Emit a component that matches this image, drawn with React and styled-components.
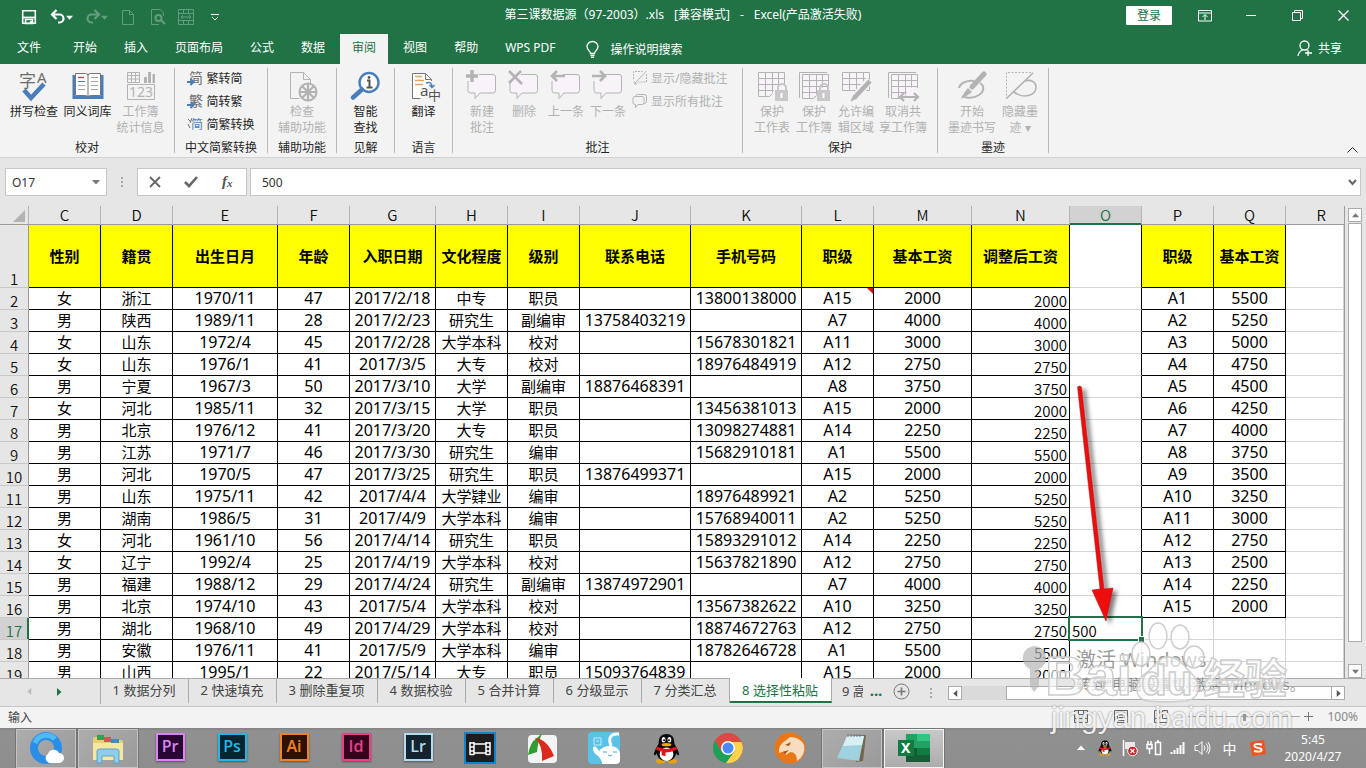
import React, { useState } from "react";
import styled, { createGlobalStyle, css } from "styled-components";

const GlobalStyle = createGlobalStyle`
  * { box-sizing: border-box; }
  body { margin: 0; overflow: hidden; }
  body, button, input {
    font-family: "Noto Sans", "Noto Sans CJK SC", sans-serif;
    font-size: 12px;
    color: #262626;
  }
  button { border: 0; padding: 0; background: none; }
  svg { display: block; flex: none; overflow: visible; }
`;

const Shell = styled.div`
  display: flex;
  flex-direction: column;
  height: 100vh;
  background: #e6e6e6;
  position: relative;
`;

/* ---------- title bar ---------- */
const TitleBar = styled.header`
  display: grid;
  grid-template-columns: 1fr auto 1fr;
  align-items: center;
  height: 34px;
  background: #217346;
  color: #fff;
`;

const QuickAccess = styled.div`
  display: flex;
  align-items: center;
  padding-left: 21px;
`;

const QuickButton = styled.button`
  width: ${(p) => p.$w}px;
  height: 24px;
  display: flex;
  align-items: center;
  color: #fff;
  opacity: ${(p) => (p.disabled ? 0.3 : 1)};
`;

const Title = styled.div`
  display: flex;
  gap: 10px;
  line-height: 30px;
  height: 34px;
`;

const WindowTools = styled.div`
  display: flex;
  justify-content: flex-end;
  height: 34px;
  padding-top: 2px;
`;

const LoginButton = styled.button`
  width: 46px;
  height: 19px;
  margin: 4px 10px 0 0;
  border-radius: 1px;
  background: #fff;
  color: #217346;
  line-height: 18px;
`;

const WindowButton = styled.button`
  width: 46px;
  height: 27px;
  display: grid;
  place-items: center;
  color: #fff;
`;

/* ---------- tabs ---------- */
const TabRow = styled.nav`
  display: flex;
  gap: 3px;
  height: 30px;
  background: #217346;
  color: #fff;
`;

const RibbonTab = styled.button`
  padding: 0 ${(p) => (p.$file ? 17 : 12)}px;
  color: ${(p) => (p.$active ? "#217346" : "#fff")};
  background: ${(p) => (p.$active ? "#f3f3f3" : "transparent")};
  line-height: 27px;
  padding-bottom: 3px;
  white-space: nowrap;
`;

const TellMe = styled.button`
  display: flex;
  align-items: center;
  gap: 12px;
  margin-left: 15px;
  color: #fff;
`;

const Share = styled(TellMe)`
  gap: 5px;
  margin: 0 24px 0 auto;
  padding-bottom: 2px;
`;

/* ---------- ribbon ---------- */
const Ribbon = styled.section`
  display: flex;
  position: relative;
  height: 94px;
  padding-top: 4px;
  background: #f3f3f3;
  border-bottom: 1px solid #d2d2d2;
`;

const Group = styled.div`
  width: ${(p) => p.$w}px;
  height: 85px;
  display: flex;
  flex-direction: column;
  justify-content: space-between;
  align-items: center;
  border-right: 1px solid #b8b8b8;
`;

const GroupBody = styled.div`
  display: flex;
  align-items: flex-start;
  ${(p) => p.$start && "align-self: flex-start; padding-left: 8px;"}
`;

const GroupLabel = styled.div`
  line-height: 11px;
`;

const BigButton = styled.button`
  width: ${(p) => p.$w}px;
  padding-top: 2px;
  display: flex;
  flex-direction: column;
  align-items: center;
  white-space: pre;
  line-height: 16px;
  color: ${(p) => (p.disabled ? "#b1b1b1" : "#262626")};
  & > svg { margin-bottom: 2px; }
`;

const SmallList = styled.div`
  display: flex;
  flex-direction: column;
  ${(p) => p.$inset && "padding-left: 3px;"}
`;

const SmallButton = styled.button`
  display: flex;
  align-items: center;
  gap: 3px;
  height: 23px;
  padding-bottom: 3px;
  white-space: nowrap;
  color: ${(p) => (p.disabled ? "#b1b1b1" : "#262626")};
`;

const CollapseButton = styled.button`
  margin: auto 8px 4px auto;
`;

/* ---------- formula bar ---------- */
const FormulaBar = styled.div`
  display: flex;
  align-items: center;
  height: 48px;
  padding: 0 5px;
`;

const boxed = css`
  height: 28px;
  background: #fff;
  border: 1px solid #c6c6c6;
  display: flex;
  align-items: center;
`;

const NameBox = styled.div`
  ${boxed}
  width: 102px;
  padding: 0 6px;
  justify-content: space-between;
`;

const PlainInput = styled.input`
  flex: 1;
  min-width: 0;
  border: 0;
  padding: 0;
  outline: 0;
  background: transparent;
  color: #333;
`;

const Dots = styled.div`
  width: ${(p) => p.$w}px;
  flex: none;
  align-self: center;
  display: flex;
  justify-content: center;
  &::before {
    content: "";
    width: 2px;
    height: 10px;
    background: repeating-linear-gradient(#a8a8a8 0 2px, transparent 2px 4px);
  }
`;

const EntryButtons = styled.div`
  ${boxed}
  width: 110px;
  justify-content: space-around;
`;

const FormulaBox = styled.div`
  ${boxed}
  flex: 1;
  margin-left: 3px;
  padding: 0 3px 0 11px;
`;

/* ---------- sheet ---------- */
const SheetArea = styled.main`
  display: flex;
  flex: 1;
  min-height: 0;
  overflow: hidden;
`;

const GridPane = styled.div`
  flex: 1;
  min-width: 0;
  overflow: hidden;
  position: relative;
  border-right: 1px solid #9b9b9b;
`;

const Grid = styled.table`
  width: 100%;
  table-layout: fixed;
  border-collapse: separate;
  border-spacing: 0;
  background: #fff;
`;

const ColHead = styled.th`
  height: 19px;
  padding: 0;
  font: 350 15px/18px "Noto Sans CJK SC", sans-serif;
  color: ${(p) => (p.$on ? "#217346" : "#111")};
  background: ${(p) => (p.$on ? "#d2d2d2" : "#e6e6e6")};
  border-bottom: 1px solid #9b9b9b;
  border-right: 1px solid #b5b5b5;
  ${(p) => p.$on && "box-shadow: inset 0 -1px #217346; border-bottom-color: #217346;"}
  ${(p) => p.$last && "text-align: right; padding-right: 18px; border-right: 0;"}
`;

const Corner = styled(ColHead)`
  & > svg { margin: 2px 3px 0 auto; }
`;

const RowHead = styled.th`
  padding: 0;
  height: 22px;
  vertical-align: bottom;
  font: 350 15px/16px "Noto Sans CJK SC", sans-serif;
  color: ${(p) => (p.$on ? "#217346" : "#111")};
  background: ${(p) => (p.$on ? "#d2d2d2" : "#e6e6e6")};
  border-bottom: 1px solid #c8c8c8;
  border-right: 1px solid ${(p) => (p.$on ? "#217346" : "#9b9b9b")};
  ${(p) => p.$on && "box-shadow: inset -1px 0 #217346;"}
`;

const Cell = styled.td`
  position: relative;
  height: 22px;
  padding: 0 0 1px;
  text-align: center;
  white-space: nowrap;
  color: #000;
  font-size: ${(p) => (p.$num ? 16 : 15)}px;
  line-height: 20px;
  border-bottom: 1px solid ${(p) => (p.$ruled ? "#000" : "#d4d4d4")};
  border-right: 1px solid ${(p) => (p.$ruled || p.$edge ? "#000" : "#d4d4d4")};
  ${(p) =>
    p.$adjusted &&
    `text-align: right; vertical-align: bottom; padding: 0 2px 0 0;
     font: 350 15px/16px "Noto Sans CJK SC", sans-serif;`}
`;

const HeadCell = styled(Cell)`
  height: 63px;
  font-weight: 700;
  background: ${(p) => (p.$ruled ? "#ff0" : "#fff")};
`;

const NoteMark = styled.span`
  position: absolute;
  top: 0;
  right: 0;
  border-top: 6px solid #e0141e;
  border-left: 6px solid transparent;
`;

const ActiveCell = styled.div`
  position: absolute;
  inset: -2px -2px -2px -2px;
  border: 2px solid #217346;
  background: #fff;
  display: flex;
  align-items: flex-end;
  z-index: 1;
  &::after {
    content: "";
    position: absolute;
    right: -3px;
    bottom: -3px;
    width: 5px;
    height: 5px;
    background: #217346;
    outline: 1px solid #fff;
  }
  input {
    width: 100%;
    border: 0;
    outline: 0;
    padding: 0 2px;
    height: 18px;
    font: 350 15px/16px "Noto Sans CJK SC", sans-serif;
    background: transparent;
    color: #000;
  }
`;

const Arrow = styled.svg`
  position: absolute;
  left: 1060px;
  top: 175px;
  z-index: 2;
`;

const VScroll = styled.div`
  width: 21px;
  display: flex;
  flex-direction: column;
  padding: 2px 4px 0 3px;
`;

const ScrollButton = styled.button`
  width: 14px;
  height: 14px;
  flex: none;
  display: grid;
  place-items: center;
  background: #fff;
  border: 1px solid #ababab;
`;

const VThumb = styled.div`
  flex: 1;
  margin: 1px 0 22px;
  background: #fff;
  border: 1px solid #ababab;
`;

/* ---------- sheet tabs ---------- */
const SheetBar = styled.div`
  display: flex;
  height: 29px;
  border-top: 1px solid #ababab;
  border-bottom: 1px solid #c6c6c6;
`;

const TabNav = styled.div`
  width: 101px;
  height: 25px;
  display: flex;
  align-items: center;
  padding-left: 26px;
  gap: 22px;
  border-right: 1px solid #ababab;
`;

const SheetTab = styled.button`
  width: ${(p) => p.$w}px;
  height: 25px;
  margin-top: -1px;
  padding-right: 1px;
  font-size: 13px;
  line-height: 23px;
  white-space: nowrap;
  color: #444;
  border-right: 1px solid #ababab;
  ${(p) =>
    p.$active &&
    `background: #fff; color: #217346; border-bottom: 2px solid #217346; line-height: 22px;`}
`;

const CutTab = styled.button`
  width: 31px;
  height: 24px;
  padding-left: 10px;
  font-size: 13px;
  line-height: 23px;
  text-align: left;
  overflow: hidden;
  white-space: nowrap;
  color: #444;
`;

const MoreTabs = styled.button`
  width: 26px;
  height: 22px;
  color: #217346;
  font-size: 15px;
  font-weight: 700;
`;

const AddSheet = styled.button`
  padding: 0 4px 2px;
`;

const HScroll = styled.div`
  flex: 1;
  display: flex;
  margin: 7px 21px 0 0;
  height: 14px;
`;

const HTrack = styled.div`
  flex: 1;
  display: flex;
  padding-left: 44px;
  background: #dadada;
`;

const HThumb = styled.div`
  flex: 1;
  background: #fff;
  border: 1px solid #ababab;
  border-right: 0;
`;

/* ---------- status bar ---------- */
const StatusBar = styled.footer`
  display: flex;
  align-items: center;
  height: 21px;
  padding: 0 8px 2px 8px;
  background: #f3f3f3;
  color: #444;
`;

const ViewButtons = styled.div`
  display: flex;
  gap: 26px;
  margin: 0 20px 0 auto;
`;

const Zoom = styled.label`
  display: flex;
  align-items: center;
  color: #777;
  gap: 4px;
`;

const ZoomRange = styled.input`
  appearance: none;
  width: 112px;
  height: 11px;
  margin: 0;
  background: linear-gradient(#aaa, #aaa) center / 100% 1px no-repeat;
  &::-webkit-slider-thumb {
    appearance: none;
    width: 3px;
    height: 9px;
    background: #999;
  }
`;

const ZoomValue = styled.output`
  margin-left: 10px;
  color: #888;
`;

/* ---------- taskbar ---------- */
const Taskbar = styled.div`
  display: flex;
  align-items: center;
  height: 40px;
  padding-left: 15px;
  background: linear-gradient(#828282, #919191 3px, #8d8d8d);
  color: #fff;
`;

const TaskButton = styled.button`
  width: 60px;
  height: 39px;
  margin: 0 1px;
  display: grid;
  place-items: center;
  ${(p) =>
    p.$open &&
    `background: linear-gradient(135deg, #adadad, #9a9a9a); border: 1px solid #c4c4c4; outline: 1px solid #757575;`}
  ${(p) => p.$front && `background: linear-gradient(#c8c8c8, #acacac); border-color: #f4f4f4;`}
`;

const AdobeTile = styled.span`
  width: 29px;
  height: 28px;
  margin-bottom: 2px;
  display: block;
  border: 2px solid ${(p) => p.$c};
  background: ${(p) => p.$bg};
  color: ${(p) => p.$c};
  font: 600 16px/22px "Open Sans", sans-serif;
  box-shadow: 0 1px 2px rgba(0, 0, 0, 0.4);
`;

const Tray = styled.div`
  display: flex;
  align-items: center;
  margin-left: auto;
`;

const TrayButton = styled.button`
  width: ${(p) => p.$w}px;
  height: 36px;
  display: grid;
  place-items: center;
  color: #fff;
  font-size: 14px;
`;

const Clock = styled.time`
  width: 84px;
  margin: 0 11px 0 0;
  text-align: center;
  line-height: 17px;
`;

/* ---------- overlays ---------- */
const Overlay = styled.div`
  position: absolute;
  right: 64px;
  bottom: 26px;
  width: 284px;
  height: 128px;
  z-index: 3;
  pointer-events: none;
`;

const ActivateNote = styled.div`
  position: absolute;
  left: 58px;
  top: 33px;
  color: rgba(110, 110, 110, 0.7);
  font-size: 15px;
  line-height: 22px;
  white-space: nowrap;
  strong {
    display: block;
    font-weight: 400;
    font-size: 20px;
    line-height: 26px;
  }
`;

const Site = styled.div`
  position: absolute;
  left: 33px;
  top: 87px;
  font: 400 30px/34px "Liberation Sans", sans-serif;
  color: rgba(255, 255, 255, 0.9);
  text-shadow: 0 0 2px rgba(90, 90, 90, 0.8);
`;

const LogoArt = styled.svg`
  position: absolute;
  left: 0;
  top: 0;
`;

/* ---------- icons ---------- */
const BLUE = "#4a7ebb";
const DIM = "#b5b2b6";

const Svg = ({ w = 32, h = w, children, ...rest }) => (
  <svg width={w} height={h} viewBox={`0 0 ${w} ${h}`} fill="none" stroke="currentColor" aria-hidden="true" {...rest}>
    {children}
  </svg>
);

const Caret = ({ dir = "down", color = "#777", size = 7 }) => {
  const turn = { down: 0, left: 90, up: 180, right: 270 }[dir];
  return (
    <svg width={size} height={size} viewBox="0 0 8 8" aria-hidden="true">
      <path d="M0 2H8L4 6.500z" fill={color} transform={`rotate(${turn} 4 4)`} />
    </svg>
  );
};

const Bubble = ({ children }) => (
  <Svg stroke={DIM}>
    <path d="M13 4.500H27a2.500 2.500 0 0 1 2.500 2.500V20.500a2.500 2.500 0 0 1-2.500 2.500H14l-5 5.500v-5.500H4.500a2.500 2.500 0 0 1-2.500-2.500V11" fill="#f7f3f9" />
    <g strokeWidth="3.400">{children}</g>
  </Svg>
);

const Table = ({ children, back }) => (
  <Svg stroke={DIM}>
    {back && <path d="M1.500 28V2.500H29" />}
    <g transform={back ? "translate(2 2)" : ""}>
      <path d="M2.500 2.500h26v17l-3 6-9-2-14 3z" fill="#f7f3f9" stroke="none" />
      <path d="M28.500 16V2.500h-26v24h11l3-3M2.500 8.500h26M2.500 14.500h26M2.500 20.500h15M9.500 2.500v24M16.500 2.500v20M22.500 2.500v13" />
    </g>
    {children}
  </Svg>
);

const Lock = () => (
  <g>
    <path d="M22 20v-2a4 4 0 0 1 8 0v2" strokeWidth="2" stroke="#c9c7ca" />
    <rect x="19" y="20" width="13" height="11" fill="#c9c7ca" stroke="none" />
    <path d="M25.500 23v5" stroke="#fff" strokeWidth="2" />
  </g>
);

const Penguin = ({ size = 30 }) => (
  <svg width={size} height={size} viewBox="0 0 32 32" aria-hidden="true">
    <ellipse cx="10" cy="29" rx="5" ry="2.500" fill="#e7a30c" />
    <ellipse cx="22" cy="29" rx="5" ry="2.500" fill="#e7a30c" />
    <path d="M16 1c-6 0-8 4-8 9 0 2-5 8-5 12 0 2 2 1 3-1 1 5 4 8 10 8s9-3 10-8c1 2 3 3 3 1 0-4-5-10-5-12 0-5-2-9-8-9z" fill="#0b0b0b" />
    <ellipse cx="16" cy="22" rx="7" ry="7" fill="#fff" />
    <ellipse cx="13" cy="7" rx="2" ry="2.800" fill="#fff" />
    <ellipse cx="19" cy="7" rx="2" ry="2.800" fill="#fff" />
    <circle cx="13.500" cy="7.500" r="1" /><circle cx="18.500" cy="7.500" r="1" />
    <ellipse cx="16" cy="12" rx="5" ry="1.600" fill="#f2a51a" />
    <path d="M6 14q10 5 20 0l1 3q-6 3-12 3v4l-4-1v-4q-4-1-6-2z" fill="#e2131c" />
  </svg>
);

const icons = {
  save: (
    <Svg w={16}>
      <path d="M1.700 1.700H14.300V14.300H1.700z" strokeWidth="1.600" />
      <path d="M2 8.500H14" strokeWidth="1.800" />
      <path d="M4.500 10.500H11.500V14.500H4.500z" strokeWidth="1.500" />
      <path d="M9 12h2v3H9z" fill="currentColor" stroke="none" />
    </Svg>
  ),
  undo: (
    <Svg w={16}><path d="M2 5.500h7.500a4 4 0 0 1 0 8H8M6.500 1L2 5.500 6.500 10" strokeWidth="2.200" /></Svg>
  ),
  redo: (
    <Svg w={16}><path d="M14 5.500H6.500a4 4 0 0 0 0 8H8M9.500 1L14 5.500 9.500 10" strokeWidth="2.200" /></Svg>
  ),
  page: <Svg w={16}><path d="M2.500 1.500h7l4 4v10h-11zM9.500 1.500v4h4" /></Svg>,
  preview: (
    <Svg w={16}>
      <path d="M13.500 7V4L10.500.5h-9v15H9" />
      <circle cx="8.500" cy="9" r="3" strokeWidth="2" /><path d="M11 11l4 4" strokeWidth="2" />
    </Svg>
  ),
  fit: <Svg w={16}><path d="M.5.500h15v15H.5zM.5 4.500h15M.5 11.500h15M5.500 1v3M10.500 1v3M5.500 12v3M10.500 12v3M3 8h10M5 6L3 8l2 2M11 6l2 2-2 2" /></Svg>,
  customise: <Svg w={8} h={7}><path d="M0 .5h8M1 3l3 3 3-3" /></Svg>,
  ribbonOpts: <Svg w={14} h={12}><path d="M.5.500h13v10.500H.5zM.5 3h13M7 10V5M4.500 7L7 4.500 9.500 7" /></Svg>,
  min: <Svg w={10} h={2}><path d="M0 .5h10" /></Svg>,
  restore: <Svg w={11}><path d="M.5 2.500h8v8h-8zM2.500 2.500v-2h8v8h-2" /></Svg>,
  close: <Svg w={11}><path d="M.5.500l10 10M10.500.5l-10 10" strokeWidth="1.300" /></Svg>,
  bulb: <Svg w={13} h={17}><path d="M4.500 12.500c0-2.500-3.500-3.500-3.500-7a5.500 5 0 0 1 11 0c0 3.500-3.500 4.500-3.500 7zM4.500 14.500h4M5 16.300h3" strokeWidth="1.300" /></Svg>,
  person: <Svg w={16} h={17}><circle cx="7.500" cy="5.500" r="4.500" strokeWidth="1.300" /><path d="M1 16c.5-3 2-5 4.500-6M11 10v6M8 13h7" strokeWidth="1.300" /></Svg>,
  spelling: (
    <Svg>
      <text x="1" y="17" fontSize="17" fill="#6d6d6d" stroke="none">字</text>
      <text x="19" y="13" fontSize="15" fill="#6d6d6d" stroke="none">A</text>
      <path d="M6 20l7 8L26 14" stroke={BLUE} strokeWidth="4.500" />
    </Svg>
  ),
  thesaurus: (
    <Svg>
      <path d="M2 5v22.500h28V5" stroke={BLUE} strokeWidth="3" fill="#fff" />
      <path d="M3.500 3.500h10q2.500 0 2.500 2 0-2 2.500-2h10v22h-10q-2.500 0-2.500 1.500 0-1.500-2.500-1.500h-10zM16 5v21" stroke="#777" fill="#fff" />
      <path d="M6 11.500h7M6 15.500h7M6 19.500h7M19 7.500h7M19 11.500h7M19 15.500h7M19 19.500h7" stroke="#a5a5a5" />
      <path d="M6 7.500h6" stroke="#c0504d" strokeWidth="1.500" /><path d="M6 11.500h7" stroke={BLUE} />
    </Svg>
  ),
  stats: (
    <Svg stroke={DIM}>
      <path d="M2.500 2.500h12v10h-12zM2.500 5.500h12M2.500 9h12M6.500 2.500v10M10.500 2.500v10M2.500 14.500h27v15h-27z" />
      <path d="M19 7h3v6h-3zM23 2h3v11h-3zM27.500 4h2.500v9h-2.500z" fill={DIM} stroke="none" />
      <text x="4" y="27" fontSize="14" fill={DIM} stroke="none">123</text>
    </Svg>
  ),
  access: (
    <Svg stroke={DIM}>
      <path d="M24.500 13V9.500l-7-7h-13v26h9M17.500 2.500v7h7" />
      <circle cx="22" cy="22" r="8.500" strokeWidth="2" />
      <path d="M22 14v16M14 22h16M16.500 16.500l11 11M27.500 16.500l-11 11" strokeWidth="2.200" />
    </Svg>
  ),
  lookup: (
    <Svg stroke={BLUE}>
      <circle cx="19" cy="12.500" r="9.500" strokeWidth="2.400" fill="#fff" />
      <path d="M12 19.500l-9 8" strokeWidth="4.500" strokeLinecap="round" />
      <path d="M17 10.500h2.500v7M16.500 17.500h6" stroke="#555" strokeWidth="2" /><circle cx="19" cy="7.500" r="1.400" fill="#555" stroke="none" />
    </Svg>
  ),
  translate: (
    <Svg stroke="#777">
      <path d="M23.500 11V9.500l-6-6h-13v25h8M17.500 3.500v6h6" fill="#fff" />
      <path d="M7 6.500h7M7 10.500h9M7 14.500h8" stroke="#e3a45c" strokeWidth="1.500" />
      <path d="M18 13q6-2 6 4M21.500 15l2.500 2.500 2.500-2.500" stroke={BLUE} strokeWidth="1.500" />
      <text x="12" y="26" fontSize="15" fill="#555" stroke="none">a</text>
      <text x="20" y="30" fontSize="13" fill="#555" stroke="none">中</text>
    </Svg>
  ),
  newNote: <Bubble><path d="M6 0v12M0 6h12" /></Bubble>,
  deleteNote: <Bubble><path d="M1 1l13 13M13 1L1 13" strokeWidth="2.600" /></Bubble>,
  prevNote: <Bubble><path d="M2 6h13M7 1L2 6l5 5" strokeWidth="2.600" /></Bubble>,
  nextNote: <Bubble><path d="M0 6h13M8 1l5 5-5 5" strokeWidth="2.600" /></Bubble>,
  toggleNote: <Svg w={16} stroke={DIM}><path d="M14.500 4v8h-8l-3 3v-3h-2M1.500 9V1.500h9" strokeDasharray="2 1" /><path d="M14.500 1L2 14" /></Svg>,
  allNotes: <Svg w={16} stroke={DIM}><path d="M3.500 4q0-2.500 2-2.500h7q2 0 2 2v5q0 2-2 2M3 3.500h7q2 0 2 2v4q0 2-2 2H6l-2.500 3v-3H3q-2 0-2-2v-4q0-2 2-2z" /></Svg>,
  protectSheet: <Table><Lock /></Table>,
  protectBook: <Table back><Lock /></Table>,
  editRange: (
    <Svg stroke={DIM}>
      <path d="M2.500 2.500h27v18h-27zM2.500 8.500h27M2.500 14.500h27M9.500 2.500v18M16.500 2.500v18M23.500 2.500v18" fill="#f7f3f9" />
      <path d="M30 10L14 28" stroke="#f3f3f3" strokeWidth="8" /><path d="M30 11L15 27" strokeWidth="4.500" /><path d="M14 25l-3 6 6-3z" fill={DIM} />
    </Svg>
  ),
  unshare: <Table back><path d="M14 27h16M17 23l-4 4 4 4M27 23l4 4-4 4" strokeWidth="2.200" /></Table>,
  ink: (
    <Svg stroke={DIM}>
      <path d="M3 18c1-5 8-8 15-7M24 13c5 3 4 9-1 12-6 4-14 3-17 1" strokeWidth="2" />
      <path d="M28 4L16 17" strokeWidth="5" strokeLinecap="round" /><path d="M12 18l4 4q-5 4-11 7 3-7 7-11z" fill={DIM} stroke="none" />
    </Svg>
  ),
  hideInk: (
    <Svg stroke={DIM}>
      <path d="M2.500 29V2.500H29" strokeDasharray="2 1.500" /><path d="M3 28L29 3M10 22c9 7 22 4 22-5 0-5-5-8-11-6" strokeWidth="1.600" />
    </Svg>
  ),
};

const ScriptIcon = ({ char, blue }) => (
  <Svg w={16}>
    <text x={blue ? 4 : 2} y="13" fontSize={blue ? 12 : 14} fill={blue ? BLUE : "#6d6d6d"} stroke="none">{char}</text>
    {blue ? <path d="M1 3l3 3M5 2L3 7M1 8l2 4" stroke="#6d6d6d" /> : <path d="M0 12h6M3.500 9l3 3-3 3" stroke={BLUE} strokeWidth="2" />}
  </Svg>
);

/* ---------- data ---------- */
const ribbonTabs = ["文件", "开始", "插入", "页面布局", "公式", "数据", "审阅", "视图", "帮助", "WPS PDF"];

const columns = [
  ["C", 72, "性别"], ["D", 72, "籍贯"], ["E", 105, "出生日月"], ["F", 72, "年龄"],
  ["G", 86, "入职日期"], ["H", 72, "文化程度"], ["I", 72, "级别"], ["J", 111, "联系电话"],
  ["K", 111, "手机号码"], ["L", 72, "职级"], ["M", 98, "基本工资"], ["N", 98, "调整后工资"],
  ["O", 72, ""], ["P", 72, "职级"], ["Q", 72, "基本工资"], ["R", null, ""],
];

const people = `女,浙江,1970/11,47,2017/2/18,中专,职员,,13800138000,A15,2000
男,陕西,1989/11,28,2017/2/23,研究生,副编审,13758403219,,A7,4000
女,山东,1972/4,45,2017/2/28,大学本科,校对,,15678301821,A11,3000
女,山东,1976/1,41,2017/3/5,大专,校对,,18976484919,A12,2750
男,宁夏,1967/3,50,2017/3/10,大学,副编审,18876468391,,A8,3750
女,河北,1985/11,32,2017/3/15,大学,职员,,13456381013,A15,2000
男,北京,1976/12,41,2017/3/20,大专,职员,,13098274881,A14,2250
男,江苏,1971/7,46,2017/3/30,研究生,编审,,15682910181,A1,5500
男,河北,1970/5,47,2017/3/25,研究生,职员,13876499371,,A15,2000
男,山东,1975/11,42,2017/4/4,大学肄业,编审,,18976489921,A2,5250
男,湖南,1986/5,31,2017/4/9,大学本科,编审,,15768940011,A2,5250
女,河北,1961/10,56,2017/4/14,研究生,职员,,15893291012,A14,2250
女,辽宁,1992/4,25,2017/4/19,大学本科,校对,,15637821890,A12,2750
男,福建,1988/12,29,2017/4/24,研究生,副编审,13874972901,,A7,4000
男,北京,1974/10,43,2017/5/4,大学本科,校对,,13567382622,A10,3250
男,湖北,1968/10,49,2017/4/29,大学本科,校对,,18874672763,A12,2750
男,安徽,1976/11,41,2017/5/9,大学本科,编审,,18782646728,A1,5500
男,山西,1995/1,22,2017/5/14,大专,职员,15093764839,,A15,2000`
  .split("\n")
  .map((line) => line.split(","));

const grades = [5500, 5250, 5000, 4750, 4500, 4250, 4000, 3750, 3500, 3250, 3000, 2750, 2500, 2250, 2000];

const sheets = [
  ["1 数据分列", 88], ["2 快速填充", 88], ["3 删除重复项", 101], ["4 数据校验", 88],
  ["5 合并计算", 88], ["6 分级显示", 88], ["7 分类汇总", 88], ["8 选择性粘贴", 102],
];

const adobe = [
  ["Pr", "#d884f5", "#2a0634"], ["Ps", "#22b8e6", "#062530"], ["Ai", "#f58220", "#2b1203"],
  ["Id", "#ee3d8b", "#34041d"], ["Lr", "#b4dcf0", "#14242e"],
];

const Big = ({ icon, w = 42, children, ...rest }) => (
  <BigButton $w={w} {...rest}>{icons[icon]}{children}</BigButton>
);

function RibbonPanel() {
  return (
    <Ribbon>
      <Group $w={175}>
        <GroupBody>
          <Big icon="spelling" w={54}>拼写检查</Big>
          <Big icon="thesaurus" w={53}>同义词库</Big>
          <Big icon="stats" w={53} disabled>{"工作簿\n统计信息"}</Big>
        </GroupBody>
        <GroupLabel>校对</GroupLabel>
      </Group>
      <Group $w={93}>
        <SmallList>
          <SmallButton><ScriptIcon char="简" />繁转简</SmallButton>
          <SmallButton><ScriptIcon char="繁" />简转繁</SmallButton>
          <SmallButton><ScriptIcon char="简" blue />简繁转换</SmallButton>
        </SmallList>
        <GroupLabel>中文简繁转换</GroupLabel>
      </Group>
      <Group $w={69}>
        <Big icon="access" w={54} disabled>{"检查\n辅助功能"}</Big>
        <GroupLabel>辅助功能</GroupLabel>
      </Group>
      <Group $w={58}>
        <Big icon="lookup">{"智能\n查找"}</Big>
        <GroupLabel>见解</GroupLabel>
      </Group>
      <Group $w={58}>
        <Big icon="translate">翻译</Big>
        <GroupLabel>语言</GroupLabel>
      </Group>
      <Group $w={290}>
        <GroupBody $start>
          <Big icon="newNote" disabled>{"新建\n批注"}</Big>
          <Big icon="deleteNote" disabled>删除</Big>
          <Big icon="prevNote" disabled>上一条</Big>
          <Big icon="nextNote" disabled>下一条</Big>
          <SmallList $inset>
            <SmallButton disabled>{icons.toggleNote}显示/隐藏批注</SmallButton>
            <SmallButton disabled>{icons.allNotes}显示所有批注</SmallButton>
          </SmallList>
        </GroupBody>
        <GroupLabel>批注</GroupLabel>
      </Group>
      <Group $w={195}>
        <GroupBody>
          <Big icon="protectSheet" disabled>{"保护\n工作表"}</Big>
          <Big icon="protectBook" disabled>{"保护\n工作簿"}</Big>
          <Big icon="editRange" disabled>{"允许编\n辑区域"}</Big>
          <Big icon="unshare" w={52} disabled>{"取消共\n享工作簿"}</Big>
        </GroupBody>
        <GroupLabel>保护</GroupLabel>
      </Group>
      <Group $w={111}>
        <GroupBody>
          <Big icon="ink" w={54} disabled>{"开始\n墨迹书写"}</Big>
          <Big icon="hideInk" disabled>{"隐藏墨\n迹 ▾"}</Big>
        </GroupBody>
        <GroupLabel>墨迹</GroupLabel>
      </Group>
      <CollapseButton aria-label="折叠功能区">
        <Svg w={11} h={6}><path d="M.5 5.500l5-5 5 5" /></Svg>
      </CollapseButton>
    </Ribbon>
  );
}

function Sheet({ value, onChange }) {
  const renderRow = (person, i) => {
    const row = i + 2;
    const on = row === 17;
    const hasGrade = i < grades.length;
    return (
      <tr key={row}>
        <RowHead $on={on}>{row}</RowHead>
        {person.map((text, c) => (
          <Cell key={c} $ruled $num={/\d/.test(text)}>
            {text}
            {row === 2 && c === 9 && <NoteMark />}
          </Cell>
        ))}
        <Cell $ruled $adjusted>{person[10]}</Cell>
        <Cell $edge={hasGrade}>
          {on && (
            <ActiveCell>
              <input aria-label="O17" value={value} onChange={onChange} />
            </ActiveCell>
          )}
        </Cell>
        <Cell $ruled={hasGrade} $num>{hasGrade && `A${i + 1}`}</Cell>
        <Cell $ruled={hasGrade} $num>{grades[i]}</Cell>
        <Cell />
      </tr>
    );
  };

  return (
    <SheetArea>
      <GridPane>
        <Grid>
          <colgroup>
            <col width={29} />
            {columns.map(([name, w]) => <col key={name} width={w ?? undefined} />)}
          </colgroup>
          <thead>
            <tr>
              <Corner><Svg w={12} stroke="none"><path d="M12 0v12H0z" fill="#b4b4b4" /></Svg></Corner>
              {columns.map(([name]) => (
                <ColHead key={name} $on={name === "O"} $last={name === "R"}>{name}</ColHead>
              ))}
            </tr>
          </thead>
          <tbody>
            <tr>
              <RowHead>1</RowHead>
              {columns.map(([name, , label]) => (
                <HeadCell key={name} $ruled={!!label} $edge={name === "O"}>{label}</HeadCell>
              ))}
            </tr>
            {people.map(renderRow)}
          </tbody>
        </Grid>
        <Arrow width="64" height="250" viewBox="0 0 64 250" aria-hidden="true">
          <defs>
            <filter id="drop" x="-50%" width="220%">
              <feDropShadow dx="4" dy="3" stdDeviation="2" floodOpacity="0.5" />
            </filter>
          </defs>
          <path d="M17.500 6q2-2 4 0L44 208l9-1-7 33-14-31 8-1z" fill="#ee1111" stroke="#a11" strokeWidth="0.500" filter="url(#drop)" />
        </Arrow>
      </GridPane>
      <VScroll>
        <ScrollButton aria-label="向上"><Caret dir="up" /></ScrollButton>
        <VThumb />
        <ScrollButton aria-label="向下"><Caret /></ScrollButton>
      </VScroll>
    </SheetArea>
  );
}

function Dock() {
  return (
    <Taskbar>
      <TaskButton $open aria-label="QQ浏览器">
        <Svg w={34} stroke="none">
          <circle cx="17" cy="17" r="12" fill="none" stroke="#2a8de8" strokeWidth="8" />
          <path d="M6 12a12 12 0 0 1 20-4" fill="none" stroke="#4fb9f5" strokeWidth="5" />
          <path d="M20 32a5 5 0 0 1-1-9 6 6 0 0 1 11-1 5 5 0 0 1 0 10z" fill="#fff" />
        </Svg>
      </TaskButton>
      <TaskButton $open aria-label="资源管理器">
        <Svg w={32} stroke="none">
          <path d="M1 7q0-2 2-2h9l2 3h15q2 0 2 2v18H1z" fill="#e9cf72" />
          <path d="M5 3h7v5H5z" fill="#2da44e" /><path d="M12 5h7v5h-7z" fill="#d9534f" /><path d="M19 7h8v4h-8z" fill="#3c8dc5" />
          <path d="M1 11h30v17H1z" fill="#f7e8a0" />
          <path d="M5 31V19q0-2 3-2h16q3 0 3 2v12h-5v-7H10v7z" fill="#8fcdeb" stroke="#5ba3c9" />
        </Svg>
      </TaskButton>
      {adobe.map(([name, c, bg]) => (
        <TaskButton key={name}><AdobeTile $c={c} $bg={bg}>{name}</AdobeTile></TaskButton>
      ))}
      <TaskButton aria-label="视频编辑">
        <Svg w={32}>
          <path d="M1 1h30v30H1z" fill="#1d1d20" stroke="#0f86cc" strokeWidth="2" />
          <path d="M6 10v13M10 10v13M22 10v13M26 10v13" stroke="#fff" strokeWidth="1.500" />
          <path d="M6 11h4M6 15h4M6 19h4M6 22.500h4M22 11h4M22 15h4M22 19h4M22 22.500h4M10 12h12M10 21h12" stroke="#fff" strokeWidth="1.500" />
        </Svg>
      </TaskButton>
      <TaskButton aria-label="录屏">
        <Svg w={32} stroke="none">
          <rect x="2" y="3" width="29" height="28" rx="4" fill="#f3f3f3" />
          <path d="M2 23Q4 10 11 6l5-5-2 6q-2 3-3 13z" fill="#2f9e2f" />
          <path d="M9 6q12 1 19 18l-12 5Q17 13 9 6z" fill="#d92a1c" />
        </Svg>
      </TaskButton>
      <TaskButton aria-label="桌面宠物">
        <Svg w={32} stroke="none">
          <rect width="32" height="32" rx="4" fill="#5bc2e7" />
          <path d="M14 30q-2-4-4-6-6-4-5-9 3-2 6 4 4-5 11-5 9 0 10 8v6q0 4-4 4H14z" fill="#fff" />
          <path d="M23 14q-4-11 5-12h3" stroke="#fff" strokeWidth="3" />
          <path d="M15 20h4M25 20h4M20 23l2 1 2-1" stroke="#4ba6d0" />
          <path d="M6 6h7v7H6zM8 9h3" stroke="#c5eafa" />
        </Svg>
      </TaskButton>
      <TaskButton aria-label="QQ"><Penguin size={31} /></TaskButton>
      <TaskButton aria-label="Chrome">
        <Svg w={30} stroke="none">
          <circle cx="15" cy="15" r="15" fill="#dd4b3e" />
          <path d="M2 7.500A15 15 0 0 0 13 30L21.500 18.500 15 15 8.500 18.500z" fill="#1fa05a" />
          <path d="M13 30A15 15 0 0 0 28.500 9H15l6.500 9.500z" fill="#fcd34a" />
          <circle cx="15" cy="15" r="7" fill="#fff" /><circle cx="15" cy="15" r="5.500" fill="#4a8af4" />
        </Svg>
      </TaskButton>
      <TaskButton aria-label="猎豹浏览器">
        <Svg w={32} stroke="none">
          <circle cx="16" cy="16" r="15.500" fill="#e97718" />
          <path d="M5 21q-1-8 6-12l5-4q10 0 14 8 2 10-7 16 0-9-7-9l-4 3-1-4-3 1z" fill="#f8dcc0" />
          <path d="M11 13l6-3-2 4zM9 20l6-2-4 4z" fill="#b84f08" />
        </Svg>
      </TaskButton>
      <TaskButton $open aria-label="记事本">
        <Svg w={32} stroke="none">
          <path d="M11 4l19-1-3 26-7 1z" fill="#75674b" />
          <path d="M11 4h17l-5 25L1 26z" fill="#9ed2de" />
          <path d="M11 4h17l-2 9L7 14z" fill="#d8eff3" />
          <path d="M12 2v3M15 2v3M18 2v3M21 2v3M24 2v3" stroke="#777" />
        </Svg>
      </TaskButton>
      <TaskButton $open $front aria-label="Excel">
        <Svg w={34} h={30} stroke="none">
          <path d="M9 1h12v14H9z" fill="#21a366" /><path d="M20 1h13v7H20z" fill="#33c481" /><path d="M20 8h13v7H20z" fill="#21a366" />
          <path d="M9 15h12v14H9z" fill="#185c37" /><path d="M20 15h13v7H20z" fill="#107c41" /><path d="M20 22h13v7H20z" fill="#185c37" />
          <path d="M1 7h16v16H1z" fill="#107c41" />
          <text x="4" y="20" fontSize="14" fontWeight="700" fill="#fff">X</text>
        </Svg>
      </TaskButton>
      <Tray>
        <TrayButton $w={24} aria-label="显示隐藏的图标"><Caret dir="up" color="#fff" size={8} /></TrayButton>
        <TrayButton $w={24} aria-label="QQ"><Penguin size={16} /></TrayButton>
        <TrayButton $w={25} aria-label="操作中心">
          <Svg w={16}>
            <path d="M1.500 0v16" strokeWidth="1.500" /><path d="M3 2h10v7H3z" fill="#e9e9e9" stroke="none" />
            <circle cx="10.500" cy="11" r="4.800" fill="#d3202a" stroke="#fff" /><path d="M8.500 9l4 4M12.500 9l-4 4" strokeWidth="1.300" />
          </Svg>
        </TrayButton>
        <TrayButton $w={24} aria-label="电源">
          <Svg w={16}><path d="M9.500 2.500h5v12h-5zM11 1h2M1 4.500h5v4H1zM2 1v3M5 1v3M3.500 8v6" strokeWidth="1.500" /></Svg>
        </TrayButton>
        <TrayButton $w={24} aria-label="网络">
          <Svg w={16}><path d="M1.500 14v-2M4.500 14v-4M7.500 14V8M10.500 14V5M13.500 14V2" strokeWidth="2" /></Svg>
        </TrayButton>
        <TrayButton $w={24} aria-label="音量">
          <Svg w={16}><path d="M1 5.500h3l4-4v13l-4-4H1zM10 5.500q2 2.500 0 5M12 3.500q4 4.500 0 9M14 2q4 6 0 12" /></Svg>
        </TrayButton>
        <TrayButton $w={31} aria-label="输入法">中</TrayButton>
        <TrayButton $w={26} aria-label="搜狗输入法">
          <Svg w={16} stroke="none">
            <path d="M0 2L14 0l2 14-14 2z" fill="#f0541e" />
            <path d="M12 4.500Q4 3 4.500 6q.5 1.500 4 2 3.500.5 3 2.500-1 2-7.500.5" stroke="#fff" strokeWidth="2" />
          </Svg>
        </TrayButton>
        <Clock dateTime="2020-04-27T05:45">5:45<br />2020/4/27</Clock>
      </Tray>
    </Taskbar>
  );
}

function Watermark() {
  const ring = { fill: "rgba(255,255,255,0.6)", stroke: "#cdcdcd", strokeWidth: 1.5 };
  return (
    <Overlay>
      <ActivateNote>
        <strong>激活 Windows</strong>
        转到“电脑设置”以激活 Windows。
      </ActivateNote>
      <LogoArt width="284" height="100" viewBox="0 0 284 100" aria-hidden="true">
        <path d="M17 32a12 12 0 0 0-5 23v17l4 6 5-6V55a12 12 0 0 0-4-23z" fill="#b5b5b5" opacity="0.7" />
        <g {...ring}>
          <ellipse cx="140" cy="22" rx="9" ry="13" />
          <ellipse cx="162" cy="23" rx="9" ry="12" />
          <ellipse cx="123" cy="40" rx="9" ry="12" />
          <ellipse cx="176" cy="43" rx="10" ry="11" />
          <path d="M150 43c-9 0-13 9-22 16-12 8-13 26 2 28 8 1 28 1 38 0 15-2 16-19 5-28-8-8-12-16-23-16z" />
          <g fontFamily="Liberation Sans, sans-serif" fontWeight="700">
            <text x="27" y="81" fontSize="56">Bai</text>
            <text x="123" y="81" fontSize="42">du</text>
          </g>
          <text x="185" y="80" fontSize="42" fontWeight="700">经验</text>
        </g>
      </LogoArt>
      <Site>jingyan.baidu.com</Site>
    </Overlay>
  );
}

function App() {
  const [tab, setTab] = useState("审阅");
  const [value, setValue] = useState("500");
  const handleChange = (e) => setValue(e.target.value);

  return (
    <Shell>
      <GlobalStyle />
      <TitleBar>
        <QuickAccess>
          <QuickButton $w={29} aria-label="保存">{icons.save}</QuickButton>
          <QuickButton $w={35} aria-label="撤消">{icons.undo}<Caret color="#fff" /></QuickButton>
          <QuickButton $w={35} disabled aria-label="恢复">{icons.redo}<Caret color="#fff" /></QuickButton>
          <QuickButton $w={30} disabled aria-label="新建">{icons.page}</QuickButton>
          <QuickButton $w={28} disabled aria-label="打印预览">{icons.preview}</QuickButton>
          <QuickButton $w={33} disabled aria-label="调整">{icons.fit}</QuickButton>
          <QuickButton $w={20} aria-label="自定义">{icons.customise}</QuickButton>
        </QuickAccess>
        <Title>
          <span>第三课数据源（97-2003）.xls</span>
          <span>[兼容模式]</span>
          <span>-</span>
          <span>Excel(产品激活失败)</span>
        </Title>
        <WindowTools>
          <LoginButton>登录</LoginButton>
          <WindowButton aria-label="功能区选项">{icons.ribbonOpts}</WindowButton>
          <WindowButton aria-label="最小化">{icons.min}</WindowButton>
          <WindowButton aria-label="还原">{icons.restore}</WindowButton>
          <WindowButton aria-label="关闭">{icons.close}</WindowButton>
        </WindowTools>
      </TitleBar>

      <TabRow>
        {ribbonTabs.map((name, i) => (
          <RibbonTab key={name} $file={i === 0} $active={name === tab} onClick={() => setTab(name)}>
            {name}
          </RibbonTab>
        ))}
        <TellMe>{icons.bulb}操作说明搜索</TellMe>
        <Share>{icons.person}共享</Share>
      </TabRow>

      <RibbonPanel />

      <FormulaBar>
        <NameBox>
          <PlainInput aria-label="名称框" defaultValue="O17" />
          <Caret size={8} />
        </NameBox>
        <Dots $w={30} />
        <EntryButtons>
          <button aria-label="取消"><Svg w={12} stroke="#666"><path d="M1 1l10 10M11 1L1 11" strokeWidth="1.800" /></Svg></button>
          <button aria-label="输入"><Svg w={14} h={12} stroke="#666"><path d="M1 6l4 4L13 1" strokeWidth="2.600" /></Svg></button>
          <button aria-label="插入函数">
            <Svg w={14} h={16} stroke="none">
              <text x="1" y="12" fontSize="15" fontStyle="italic" fontWeight="700" fontFamily="Liberation Serif, serif" fill="#555">f</text>
              <text x="6" y="13" fontSize="11" fontStyle="italic" fontWeight="700" fontFamily="Liberation Serif, serif" fill="#555">x</text>
            </Svg>
          </button>
        </EntryButtons>
        <FormulaBox>
          <PlainInput aria-label="编辑栏" value={value} onChange={handleChange} />
          <Svg w={9} h={7} stroke="#666"><path d="M1 1l3.500 4L8 1" strokeWidth="2" /></Svg>
        </FormulaBox>
      </FormulaBar>

      <Sheet value={value} onChange={handleChange} />

      <SheetBar>
        <TabNav>
          <Caret dir="left" color="#bbb" />
          <Caret dir="right" color="#217346" size={8} />
        </TabNav>
        {sheets.map(([name, w]) => (
          <SheetTab key={name} $w={w} $active={name[0] === "8"}>{name}</SheetTab>
        ))}
        <CutTab>9 高</CutTab>
        <MoreTabs>...</MoreTabs>
        <AddSheet aria-label="新工作表">
          <Svg w={17} stroke="#777"><circle cx="8.500" cy="8.500" r="7.500" /><path d="M8.500 4.500v8M4.500 8.500h8" strokeWidth="1.600" /></Svg>
        </AddSheet>
        <Dots $w={34} />
        <HScroll>
          <ScrollButton aria-label="向左"><Caret dir="left" color="#555" /></ScrollButton>
          <HTrack><HThumb /></HTrack>
          <ScrollButton aria-label="向右"><Caret dir="right" color="#555" /></ScrollButton>
        </HScroll>
      </SheetBar>

      <StatusBar>
        输入
        <ViewButtons>
          <button aria-label="普通"><Svg w={14} h={13} stroke="#666"><path d="M.5.500h13v12H.5zM.5 4.500h13M.5 8.500h13M4.500.5v12M9.500.5v12" /></Svg></button>
          <button aria-label="页面布局"><Svg w={14} h={13} stroke="#666"><path d="M.5.500h13v12H.5zM3.500 2.500h7v8h-7zM5 5h4M5 7.500h4" /></Svg></button>
          <button aria-label="分页预览"><Svg w={14} h={13} stroke="#666"><path d="M.5.500h5v8h-5zM8.500.5h5v8h-5zM.5 12.500h13M.5 8.500v4M13.500 8.500v4" /></Svg></button>
        </ViewButtons>
        <Zoom>
          <ZoomRange type="range" defaultValue="50" aria-label="缩放" />
          <Svg w={9}><path d="M4.500 0v9M0 4.500h9" /></Svg>
          <ZoomValue>100%</ZoomValue>
        </Zoom>
      </StatusBar>

      <Dock />
      <Watermark />
    </Shell>
  );
}

export default App;
